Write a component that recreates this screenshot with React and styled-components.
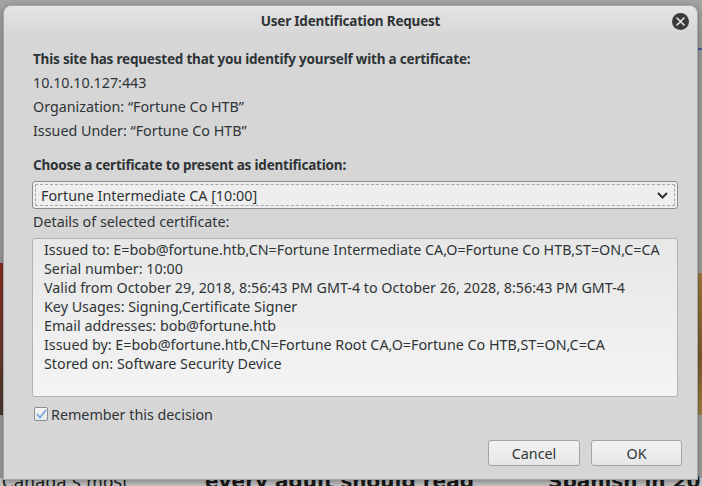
import React from 'react';
import styled, { createGlobalStyle } from 'styled-components';

const GlobalStyle = createGlobalStyle`
  html, body {
    margin: 0;
    padding: 0;
    width: 702px;
    height: 486px;
    overflow: hidden;
  }
  body {
    font-family: "Noto Sans", "DejaVu Sans", sans-serif;
    color: #2e3436;
  }
`;

const Desktop = styled.div`
  position: relative;
  width: 702px;
  height: 486px;
  box-sizing: border-box;
  padding: 5px 4px 6px 3px;
  display: flex;
  background: #9c9c9c;
  overflow: hidden;
`;

// bits of the web page that peek out behind the dialog
const Peek = styled.div`
  position: absolute;
  left: ${(p) => p.$x}px;
  top: ${(p) => p.$y}px;
  width: ${(p) => p.$w}px;
  height: ${(p) => p.$h}px;
  background: ${(p) => p.$bg};
`;

const PeekText = styled.div`
  position: absolute;
  left: ${(p) => p.$x}px;
  top: ${(p) => p.$y}px;
  font-family: "DejaVu Sans", sans-serif;
  font-size: ${(p) => p.$size}px;
  font-weight: ${(p) => (p.$bold ? 700 : 400)};
  color: #1a1a1a;
  white-space: nowrap;
`;

const Dialog = styled.div`
  position: relative;
  z-index: 1;
  flex: 1;
  display: flex;
  flex-direction: column;
  background: #d6d6d6;
  border: 1px solid #a8a8a8;
  border-radius: 8px 8px 0 0;
  box-shadow: 0 2px 6px rgba(0, 0, 0, 0.35);
`;

const Header = styled.div`
  height: 32px;
  display: grid;
  grid-template-columns: 40px 1fr 40px;
  align-items: center;
  border-radius: 8px 8px 0 0;
  background: linear-gradient(#e4e4e4, #d6d6d6);
`;

const Title = styled.div`
  grid-column: 2;
  text-align: center;
  font-weight: 700;
  font-size: 13.5px;
  letter-spacing: -0.2px;
  color: #2e3436;
`;

const CloseButton = styled.div`
  justify-self: end;
  margin-right: 8px;
  width: 17px;
  height: 17px;
  display: flex;
  align-items: center;
  justify-content: center;
  border-radius: 50%;
  background: #3a3a3a;
`;

const Content = styled.div`
  flex: 1;
  display: flex;
  flex-direction: column;
  padding: 11px 19px 13px 29px;
  font-size: 14.3px;
`;

const Line = styled.div`
  height: 24px;
  line-height: 24px;
  margin-top: ${(p) => p.$mt || 0}px;
  white-space: nowrap;
`;

const Heading = styled(Line)`
  font-weight: 700;
  font-size: 13.5px;
  letter-spacing: -0.2px;
`;

const Select = styled.div`
  position: relative;
  margin: 4px 0 0 -1px;
  height: 28px;
  box-sizing: border-box;
  border: 1px solid #8e8e8e;
  border-radius: 3px;
  background: #eeeeee;
  display: flex;
  align-items: center;
  justify-content: space-between;
  padding: 0 9px 0 8px;

  &::after {
    content: '';
    position: absolute;
    inset: 2px;
    border: 1px dashed #a6a6a6;
    border-radius: 1px;
    pointer-events: none;
  }
`;

const Details = styled.div`
  margin: 4px 0 0 -1px;
  height: 159px;
  box-sizing: border-box;
  border: 1px solid #b3b3b3;
  border-radius: 3px;
  background: linear-gradient(#e7e7e7, #f4f4f4);
  padding: 1px 8px 0 11px;
`;

const DetailLine = styled.div`
  height: 19px;
  line-height: 19px;
  white-space: nowrap;
`;

const CheckRow = styled.label`
  margin-top: 7px;
  height: 20px;
  display: flex;
  align-items: center;
  gap: 3px;
  padding-left: 1px;
`;

const CheckBox = styled.span`
  width: 14px;
  height: 14px;
  box-sizing: border-box;
  border: 1px solid #8c8c8c;
  border-radius: 2px;
  background: linear-gradient(#f6f6f6, #e8e8e8);
  display: flex;
  align-items: center;
  justify-content: center;
`;

const ButtonRow = styled.div`
  margin-top: 16px;
  margin-right: -4px;
  display: flex;
  justify-content: flex-end;
  gap: 11px;
`;

const Button = styled.div`
  width: ${(p) => p.$w}px;
  height: 26px;
  box-sizing: border-box;
  border: 1px solid #a3a3a3;
  border-radius: 3px;
  background: linear-gradient(#f2f2f2, #e6e6e6);
  display: flex;
  align-items: center;
  justify-content: center;
`;

const details = [
  'Issued to: E=bob@fortune.htb,CN=Fortune Intermediate CA,O=Fortune Co HTB,ST=ON,C=CA',
  'Serial number: 10:00',
  'Valid from October 29, 2018, 8:56:43 PM GMT-4 to October 26, 2028, 8:56:43 PM GMT-4',
  'Key Usages: Signing,Certificate Signer',
  'Email addresses: bob@fortune.htb',
  'Issued by: E=bob@fortune.htb,CN=Fortune Root CA,O=Fortune Co HTB,ST=ON,C=CA',
  'Stored on: Software Security Device',
];

export default function App() {
  return (
    <>
      <GlobalStyle />
      <Desktop>
        <Peek $x={0} $y={0} $w={702} $h={33} $bg="#a2a2a2" />
        <Peek $x={0} $y={263} $w={4} $h={152} $bg="linear-gradient(#8a2a22, #6a3a2a 60%, #4a3a30)" />
        <Peek $x={698} $y={273} $w={4} $h={142} $bg="linear-gradient(#9c7a3a, #7a5a2a 60%, #a08040)" />
        <Peek $x={698} $y={48} $w={4} $h={2} $bg="#4a5aa8" />
        <Peek $x={0} $y={478} $w={702} $h={8} $bg="#c4c4c4" />
        <PeekText $x={2} $y={472} $size={17}>Canada’s most</PeekText>
        <PeekText $x={205} $y={469} $size={20} $bold>every adult should read</PeekText>
        <PeekText $x={548} $y={469} $size={20} $bold>Spanish in 20 Mi</PeekText>

        <Dialog>
          <Header>
            <Title>User Identification Request</Title>
            <CloseButton>
              <svg width="9" height="9" viewBox="0 0 9 9">
                <path d="M1 1 L8 8 M8 1 L1 8" stroke="#e8e8e8" strokeWidth="1.6" strokeLinecap="round" />
              </svg>
            </CloseButton>
          </Header>
          <Content>
            <Heading>This site has requested that you identify yourself with a certificate:</Heading>
            <Line>10.10.10.127:443</Line>
            <Line>Organization: “Fortune Co HTB”</Line>
            <Line>Issued Under: “Fortune Co HTB”</Line>
            <Heading $mt={10}>Choose a certificate to present as identification:</Heading>
            <Select>
              <span>Fortune Intermediate CA [10:00]</span>
              <svg width="11" height="7" viewBox="0 0 11 7">
                <path d="M1 1 L5.5 5.5 L10 1" fill="none" stroke="#2e3436" strokeWidth="2" />
              </svg>
            </Select>
            <Line $mt={1}>Details of selected certificate:</Line>
            <Details>
              {details.map((d) => (
                <DetailLine key={d}>{d}</DetailLine>
              ))}
            </Details>
            <CheckRow>
              <CheckBox>
                <svg width="11" height="10" viewBox="0 0 11 10">
                  <path d="M1 5 L4 8.5 L10 1" fill="none" stroke="#6a9fd6" strokeWidth="1.5" />
                </svg>
              </CheckBox>
              Remember this decision
            </CheckRow>
            <ButtonRow>
              <Button $w={92}>Cancel</Button>
              <Button $w={91}>OK</Button>
            </ButtonRow>
          </Content>
        </Dialog>
      </Desktop>
    </>
  );
}
